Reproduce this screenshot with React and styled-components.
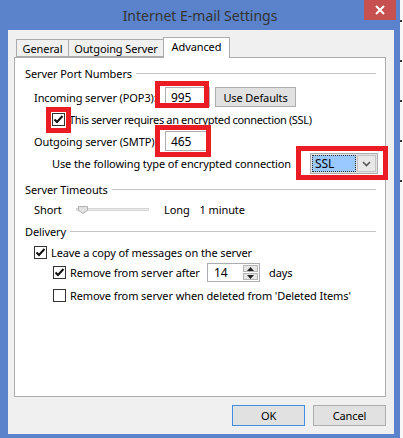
import React from "react";
import styled, { createGlobalStyle } from "styled-components";

const FONT = `"Noto Sans", "Open Sans", sans-serif`;

const Global = createGlobalStyle`
  html, body {
    margin: 0;
    padding: 0;
    background: #ffffff;
  }
  body {
    font-family: ${FONT};
    font-size: 11px;
    letter-spacing: -0.1px;
    color: #000;
  }
`;

const Page = styled.div`
  display: flex;
  width: 403px;
  height: 438px;
  overflow: hidden;
`;

const Window = styled.div`
  width: 400px;
  height: 438px;
  background: #5b83cc;
  display: flex;
  flex-direction: column;
  padding: 0 6px 4px 8px;
  box-sizing: border-box;
`;

const Strip = styled.div`
  width: 3px;
  height: 438px;
  background: #f7f7f7;
  display: flex;
  flex-direction: column;
  gap: 38px;
  padding-top: 20px;
  box-sizing: border-box;
  span {
    display: block;
    height: 2px;
    width: 2px;
    background: #333;
  }
`;

const TitleBar = styled.div`
  height: 30px;
  display: grid;
  grid-template-columns: 1fr auto 1fr;
  margin-left: -8px;
  margin-right: -6px;
`;

const Title = styled.div`
  grid-column: 2;
  align-self: center;
  font-size: 14px;
  letter-spacing: 0;
  color: #333;
  padding-top: 1px;
`;

const Close = styled.div`
  grid-column: 3;
  justify-self: end;
  align-self: start;
  width: 32px;
  height: 20px;
  margin-right: 4px;
  background: #c75050;
  display: flex;
  align-items: center;
  justify-content: center;
`;

const Client = styled.div`
  flex: 1;
  background: #f0f0f0;
  display: flex;
  flex-direction: column;
  padding: 7px 8px 0 6px;
`;

const Tabs = styled.div`
  display: flex;
  align-items: flex-end;
  padding-left: 2px;
  height: 20px;
  position: relative;
  z-index: 1;
`;

const Tab = styled.div`
  height: ${(p) => (p.$active ? 21 : 18)}px;
  width: ${(p) => p.$w}px;
  box-sizing: border-box;
  border: 1px solid #acacac;
  border-bottom: ${(p) => (p.$active ? "none" : "1px solid #acacac")};
  margin-left: ${(p) => (p.$first ? 0 : -1)}px;
  background: ${(p) => (p.$active ? "#fff" : "#f0f0f0")};
  display: flex;
  align-items: center;
  justify-content: center;
  padding-bottom: ${(p) => (p.$active ? 3 : 0)}px;
  margin-bottom: ${(p) => (p.$active ? -1 : 0)}px;
`;

const Panel = styled.div`
  height: 340px;
  box-sizing: border-box;
  background: #fff;
  border: 1px solid #acacac;
  display: flex;
  flex-direction: column;
  padding: 7px 9px 0 10px;
`;

const Header = styled.div`
  height: 16px;
  display: flex;
  align-items: center;
  gap: 4px;
  margin-top: ${(p) => p.$mt || 0}px;
  color: #000;
  &::after {
    content: "";
    flex: 1;
    height: 1px;
    background: #c4c4c4;
  }
`;

const Row = styled.div`
  display: flex;
  align-items: center;
  height: ${(p) => p.$h || 20}px;
  margin-top: ${(p) => p.$mt || 0}px;
  padding-left: ${(p) => p.$indent || 0}px;
  gap: ${(p) => p.$gap || 0}px;
`;

const Label = styled.span`
  width: ${(p) => (p.$w ? `${p.$w}px` : "auto")};
  margin-left: ${(p) => p.$ml || 0}px;
  flex-shrink: 0;
  white-space: nowrap;
`;

const Mark = styled.span`
  position: relative;
  display: inline-flex;
  &::after {
    content: "";
    position: absolute;
    top: ${(p) => p.$t}px;
    right: ${(p) => p.$r}px;
    bottom: ${(p) => p.$b}px;
    left: ${(p) => p.$l}px;
    border: 5px solid #ec1c24;
    pointer-events: none;
  }
`;

const TextBox = styled.div`
  width: ${(p) => p.$w}px;
  height: ${(p) => p.$h || 20}px;
  box-sizing: border-box;
  border: 1px solid #abadb3;
  background: #fff;
  display: flex;
  align-items: center;
  padding-left: 5px;
  font-size: 12px;
`;

const Button = styled.div`
  width: ${(p) => p.$w}px;
  height: ${(p) => p.$h || 21}px;
  margin-left: ${(p) => p.$ml || 0}px;
  box-sizing: border-box;
  border: 1px solid ${(p) => (p.$default ? "#3c8fe3" : "#adadad")};
  background: #e1e1e1;
  display: flex;
  align-items: center;
  justify-content: center;
`;

const Box = styled.div`
  width: 13px;
  height: 13px;
  box-sizing: border-box;
  border: 1px solid #333;
  background: #fff;
  display: flex;
  align-items: center;
  justify-content: center;
  flex-shrink: 0;
`;

const Check = ({ on }) => (
  <Box>
    {on && (
      <svg width="11" height="11" viewBox="0 0 11 11">
        <path d="M1.5 5.5 L4 8 L9.5 2" stroke="#111" strokeWidth="2" fill="none" />
      </svg>
    )}
  </Box>
);

const CheckRow = styled.div`
  display: flex;
  align-items: center;
  gap: 4px;
  white-space: nowrap;
  letter-spacing: ${(p) => (p.$tight ? -0.35 : -0.1)}px;
`;

const Select = styled.div`
  width: 68px;
  height: 21px;
  box-sizing: border-box;
  border: 1px solid #acacac;
  background: #e5e5e5;
  display: flex;
  align-items: stretch;
  padding: 1px;
  gap: 1px;
`;

const SelectValue = styled.div`
  flex: 1;
  background: #99c9ff;
  outline: 1px dotted #333;
  outline-offset: -1px;
  display: flex;
  align-items: center;
  padding-left: 3px;
  font-size: 12px;
`;

const SelectArrow = styled.div`
  width: 17px;
  border: 1px solid #c3c3c3;
  background: #e8e8e8;
  display: flex;
  align-items: center;
  justify-content: center;
`;

const Slider = styled.div`
  position: relative;
  width: 73px;
  height: 3px;
  background: #e7eaea;
  border: 1px solid #d6d6d6;
  box-sizing: border-box;
`;

const Thumb = styled.svg`
  position: absolute;
  left: 1px;
  top: -3px;
`;

const Spin = styled.div`
  width: 53px;
  height: 19px;
  box-sizing: border-box;
  border: 1px solid #abadb3;
  background: #fff;
  display: flex;
  align-items: stretch;
`;

const SpinText = styled.div`
  flex: 1;
  display: flex;
  align-items: center;
  padding-left: 6px;
  font-size: 12px;
`;

const SpinBtns = styled.div`
  width: 15px;
  display: flex;
  flex-direction: column;
  gap: 1px;
  padding: 1px 1px 1px 0;
`;

const SpinBtn = styled.div`
  flex: 1;
  background: #e6e6e6;
  border: 1px solid #b5b5b5;
  display: flex;
  align-items: center;
  justify-content: center;
`;

const Footer = styled.div`
  display: flex;
  justify-content: flex-end;
  gap: 8px;
  margin-top: 8px;
`;

export default function App() {
  return (
    <Page>
      <Global />
      <Window>
        <TitleBar>
          <Title>Internet E-mail Settings</Title>
          <Close>
            <svg width="10" height="10" viewBox="0 0 10 10">
              <path d="M1 1 L9 9 M9 1 L1 9" stroke="#fff" strokeWidth="2" />
            </svg>
          </Close>
        </TitleBar>
        <Client>
          <Tabs>
            <Tab $first $w={53}>General</Tab>
            <Tab $w={96}>Outgoing Server</Tab>
            <Tab $active $w={67}>Advanced</Tab>
          </Tabs>
          <Panel>
            <Header>Server Port Numbers</Header>
            <Row $mt={6} $indent={9}>
              <Label $w={131}>Incoming server (POP3):</Label>
              <Mark $t={-6} $r={1} $b={-1} $l={-10}>
                <TextBox $w={45}>995</TextBox>
              </Mark>
              <Button $w={81} $h={20} $ml={5}>Use Defaults</Button>
            </Row>
            <Row $mt={5} $h={14} $indent={27}>
              <CheckRow $tight>
                <Mark $t={-6} $r={-6} $b={-7} $l={-6}>
                  <Check on />
                </Mark>
                This server requires an encrypted connection (SSL)
              </CheckRow>
            </Row>
            <Row $mt={5} $indent={9}>
              <Label $w={131}>Outgoing server (SMTP):</Label>
              <Mark $t={-6} $r={-1} $b={-6} $l={-10}>
                <TextBox $w={45}>465</TextBox>
              </Mark>
            </Row>
            <Row $mt={2} $h={21} $indent={27}>
              <Label $w={258}>Use the following type of encrypted connection</Label>
              <Mark $t={-7} $r={-10} $b={-6} $l={-14}>
                <Select>
                  <SelectValue>SSL</SelectValue>
                  <SelectArrow>
                    <svg width="9" height="6" viewBox="0 0 9 6">
                      <path d="M1 1 L4.5 4.5 L8 1" stroke="#555" strokeWidth="1.6" fill="none" />
                    </svg>
                  </SelectArrow>
                </Select>
              </Mark>
            </Row>
            <Header $mt={7}>Server Timeouts</Header>
            <Row $mt={4} $h={16} $indent={9}>
              <Label $w={42}>Short</Label>
              <Slider>
                <Thumb width="10" height="8" viewBox="0 0 10 8">
                  <path d="M0.5 0.5 H9.5 V4.5 L5 7.5 L0.5 4.5 Z" fill="#e2e2e2" stroke="#b0b0b0" />
                </Thumb>
              </Slider>
              <Label $ml={15}>Long</Label>
              <Label $ml={10}>1 minute</Label>
            </Row>
            <Header $mt={6}>Delivery</Header>
            <Row $mt={6} $h={14} $indent={9}>
              <CheckRow>
                <Check on />
                Leave a copy of messages on the server
              </CheckRow>
            </Row>
            <Row $mt={4} $h={19} $indent={28}>
              <CheckRow>
                <Check on />
                <Label $w={137}>Remove from server after</Label>
              </CheckRow>
              <Spin>
                <SpinText>14</SpinText>
                <SpinBtns>
                  <SpinBtn>
                    <svg width="7" height="4" viewBox="0 0 7 4"><path d="M0 4 L3.5 0 L7 4 Z" fill="#222" /></svg>
                  </SpinBtn>
                  <SpinBtn>
                    <svg width="7" height="4" viewBox="0 0 7 4"><path d="M0 0 L3.5 4 L7 0 Z" fill="#222" /></svg>
                  </SpinBtn>
                </SpinBtns>
              </Spin>
              <Label $ml={9}>days</Label>
            </Row>
            <Row $mt={6} $h={14} $indent={28}>
              <CheckRow>
                <Check />
                Remove from server when deleted from 'Deleted Items'
              </CheckRow>
            </Row>
          </Panel>
          <Footer>
            <Button $default $w={73}>OK</Button>
            <Button $w={73}>Cancel</Button>
          </Footer>
        </Client>
      </Window>
      <Strip>
        <span />
        <span />
        <span />
        <span />
        <span />
      </Strip>
    </Page>
  );
}
